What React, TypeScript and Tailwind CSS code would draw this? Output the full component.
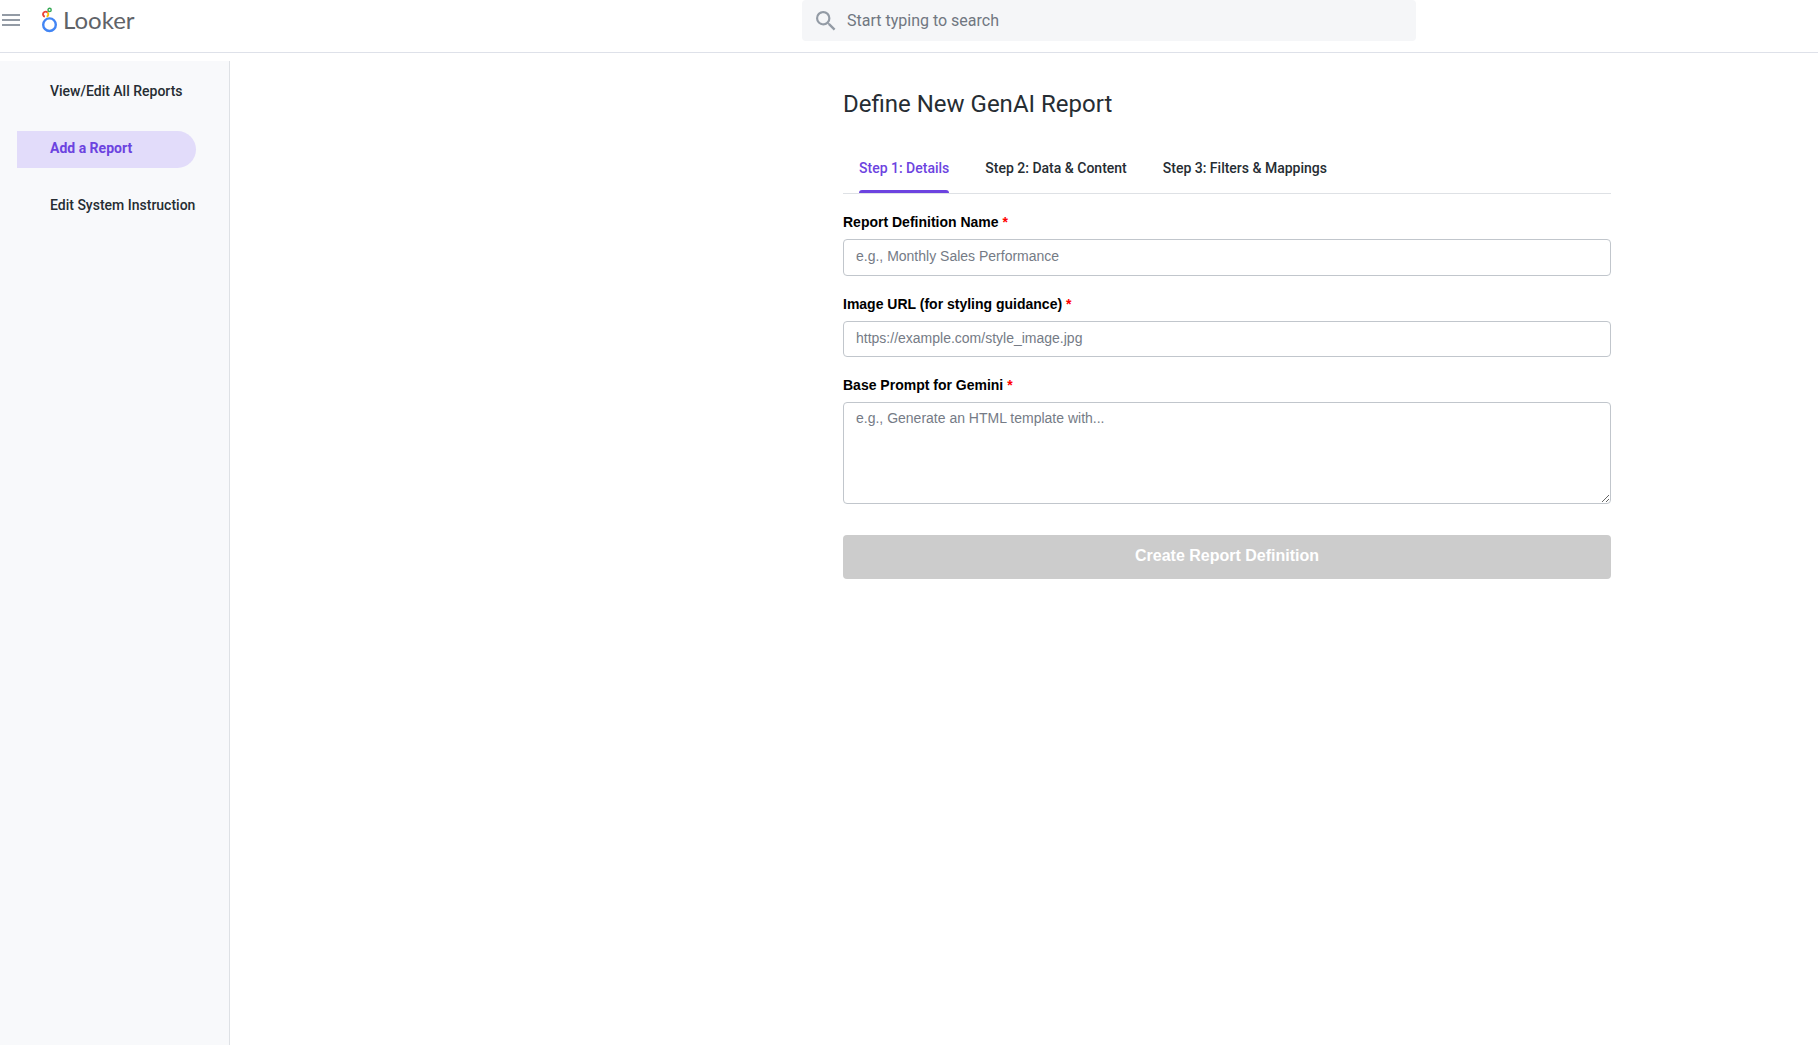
import React from "react";

function LookerMark() {
  return (
    <svg width="16" height="26" viewBox="0 0 16 26" fill="none" aria-hidden="true">
      <circle cx="7.5" cy="17.7" r="6.3" stroke="#4285F4" strokeWidth="2.4" />
      <path d="M2.9 9.7A2.6 2.6 0 1 1 5.7 5.6" stroke="#EA4335" strokeWidth="1.9" />
      <path d="M5.7 5.6A2.6 2.6 0 0 1 4.6 9.7" stroke="#FBBC04" strokeWidth="1.9" />
      <circle cx="7.6" cy="2.9" r="1.6" stroke="#34A853" strokeWidth="1.4" />
    </svg>
  );
}

function Header() {
  return (
    <header className="grid h-[53px] grid-cols-[802fr_614fr_402fr] items-start border-b border-[#dee1e9] bg-white">
      <div className="flex h-10 items-center pl-[2px]">
        <button type="button" aria-label="Toggle menu" className="flex w-[18px] flex-col gap-[3px]">
          <span className="h-[2px] w-full bg-[#939ba5]" />
          <span className="h-[2px] w-full bg-[#939ba5]" />
          <span className="h-[2px] w-full bg-[#939ba5]" />
        </button>
        <a href="#home" className="ml-[22px] flex items-center gap-[5px]">
          <LookerMark />
          <span className="font-['Lato'] text-[24px] leading-10 text-[#5f6368]">Looker</span>
        </a>
      </div>
      <label className="flex h-[41px] items-center gap-[11px] rounded bg-[#f5f6f8] px-[14px]">
        <svg width="20" height="20" viewBox="3 3 18 18" fill="#939ba5" aria-hidden="true">
          <path d="M15.5 14h-.79l-.28-.27A6.471 6.471 0 0 0 16 9.5 6.5 6.5 0 1 0 9.5 16c1.61 0 3.09-.59 4.23-1.57l.27.28v.79l5 4.99L20.49 19l-4.99-5zm-6 0C7.01 14 5 11.99 5 9.5S7.01 5 9.5 5 14 7.01 14 9.5 11.99 14 9.5 14z" />
        </svg>
        <input
          type="search"
          aria-label="Search"
          placeholder="Start typing to search"
          className="h-full min-w-0 flex-1 bg-transparent text-base text-[#343c42] outline-none placeholder:text-[#707781]"
        />
      </label>
    </header>
  );
}

const navItems = [
  { label: "View/Edit All Reports", active: false },
  { label: "Add a Report", active: true },
  { label: "Edit System Instructions", active: false },
];

function Sidebar() {
  return (
    <nav className="w-[230px] shrink-0 border-r border-[#dee1e5] bg-[#f8f9fb] pt-[13px] pr-[33px] pl-[17px]">
      <ul className="flex flex-col gap-5">
        {navItems.map((item) => (
          <li key={item.label}>
            <a
              href="#reports"
              aria-current={item.active ? "page" : undefined}
              className={
                item.active
                  ? "block h-[37px] overflow-hidden rounded-r-full bg-[#e2dcfa] pl-[33px] text-[14px] leading-[35px] font-bold whitespace-nowrap text-[#6c43e0]"
                  : "block h-[37px] overflow-hidden pl-[33px] text-[14px] leading-[35px] font-medium whitespace-nowrap text-[#262d33]"
              }
            >
              {item.label}
            </a>
          </li>
        ))}
      </ul>
    </nav>
  );
}

const tabs = ["Step 1: Details", "Step 2: Data & Content", "Step 3: Filters & Mappings"];

function Tabs() {
  return (
    <div role="tablist" className="mt-[27px] flex h-[45px] gap-9 border-b border-[#dee1e5] pl-4">
      {tabs.map((tab, i) => (
        <button
          key={tab}
          type="button"
          role="tab"
          aria-selected={i === 0}
          className={
            i === 0
              ? "flex flex-col justify-between text-[14px] leading-[38px] font-medium text-[#6c43e0]"
              : "flex flex-col justify-between text-[14px] leading-[38px] font-medium text-[#262d33]"
          }
        >
          {tab}
          {i === 0 && <span className="h-[3px] w-full rounded-t-sm bg-[#6c43e0]" />}
        </button>
      ))}
    </div>
  );
}

function FieldLabel({ htmlFor, children }: { htmlFor: string; children: React.ReactNode }) {
  return (
    <label htmlFor={htmlFor} className="block text-[14px] leading-5 font-bold text-black">
      {children} <span className="text-[#f00]">*</span>
    </label>
  );
}

const fieldClass =
  "mt-[7px] block w-full rounded border border-[#c1c6cc] bg-white px-3 text-[14px] text-black outline-none placeholder:text-[#757b86]";

function ReportForm() {
  return (
    <form className="mt-[18px] font-['Liberation_Sans',sans-serif]">
      <FieldLabel htmlFor="name">Report Definition Name</FieldLabel>
      <input
        id="name"
        type="text"
        placeholder="e.g., Monthly Sales Performance"
        className={`${fieldClass} h-[37px] pb-[3px]`}
      />
      <div className="mt-[18px]">
        <FieldLabel htmlFor="image">Image URL (for styling guidance)</FieldLabel>
        <input
          id="image"
          type="text"
          placeholder="https://example.com/style_image.jpg"
          className={`${fieldClass} h-9 pb-[3px]`}
        />
      </div>
      <div className="mt-[18px]">
        <FieldLabel htmlFor="prompt">Base Prompt for Gemini</FieldLabel>
        <textarea
          id="prompt"
          placeholder="e.g., Generate an HTML template with..."
          className={`${fieldClass} h-[102px] resize-y py-[6px] leading-[18px]`}
        />
      </div>
      <button
        type="button"
        disabled
        className="mt-[31px] block h-11 w-full rounded bg-[#ccc] pb-[2px] text-base font-bold text-white"
      >
        Create Report Definition
      </button>
    </form>
  );
}

export default function App() {
  return (
    <div className="flex min-h-screen flex-col bg-white font-['Roboto',sans-serif]">
      <Header />
      <div className="mt-2 flex flex-1">
        <Sidebar />
        <main className="flex-1 pt-[25px] pl-[406px]">
          <div className="mx-auto max-w-3xl">
            <h1 className="text-[24px] leading-9 text-[#262d33]">Define New GenAI Report</h1>
            <Tabs />
            <ReportForm />
          </div>
        </main>
      </div>
    </div>
  );
}
